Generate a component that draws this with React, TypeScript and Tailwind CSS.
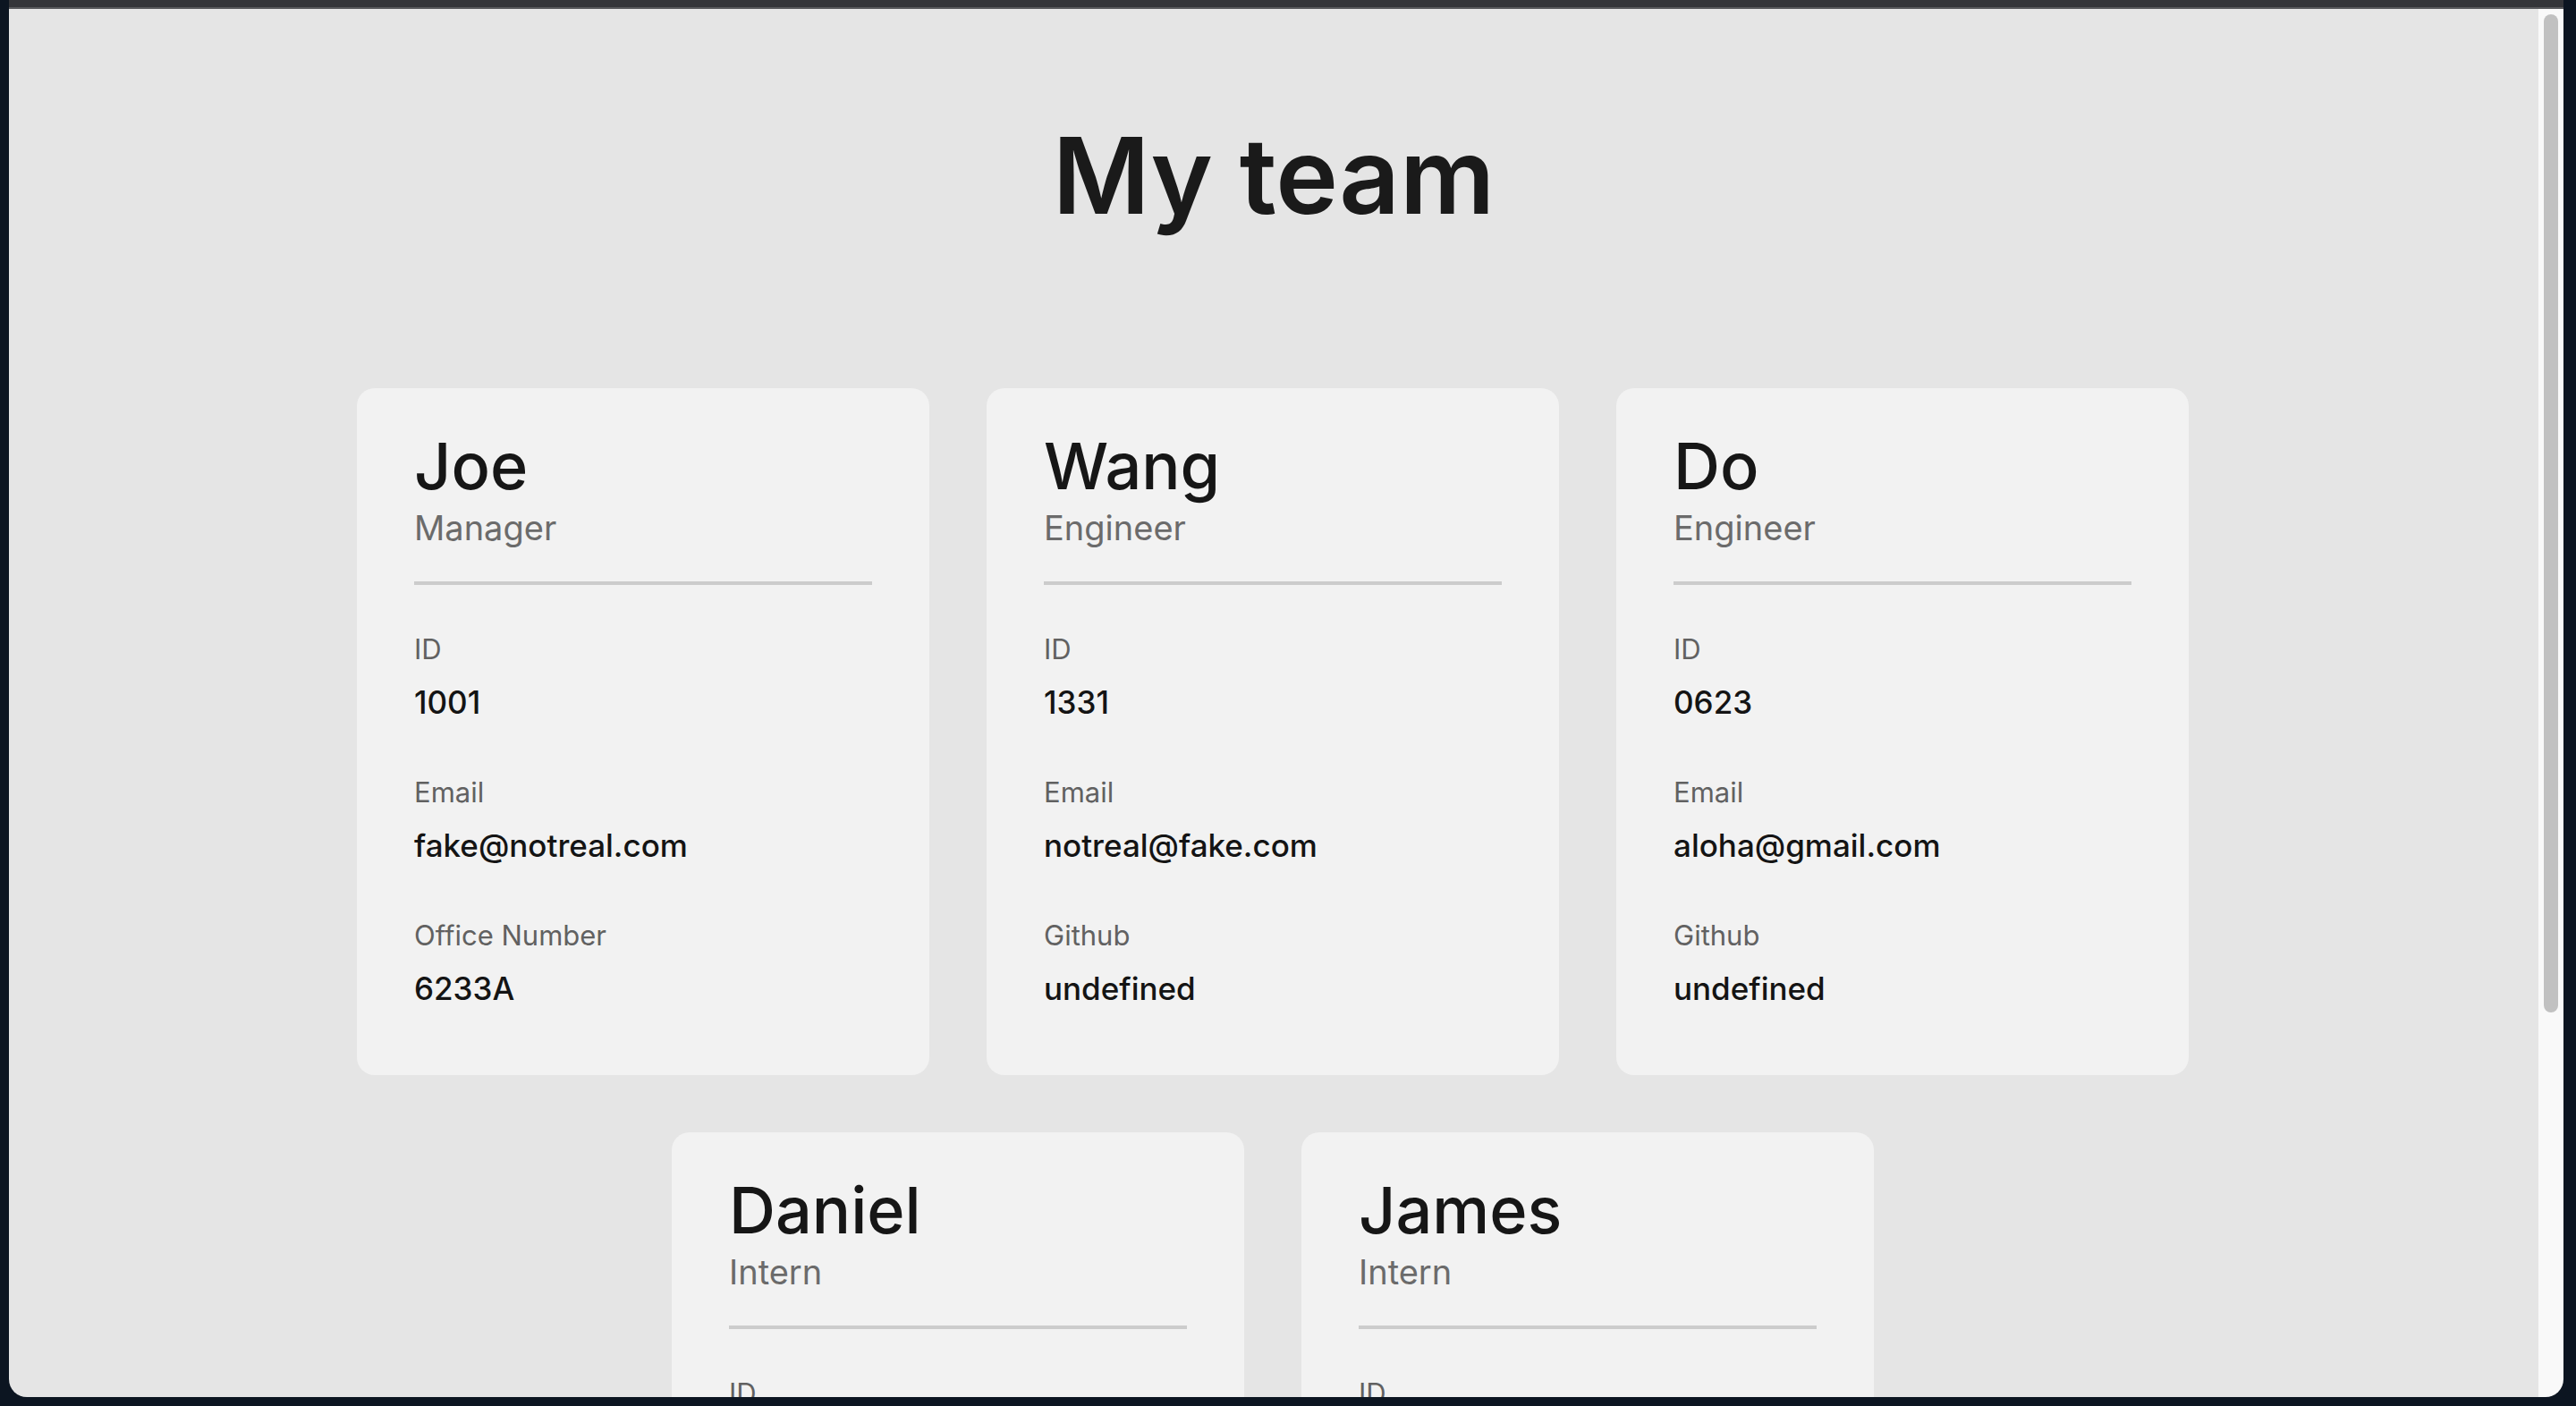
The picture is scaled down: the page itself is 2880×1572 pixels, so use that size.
const team = [
  { name: "Joe", role: "Manager", id: "1001", email: "fake@notreal.com", extraLabel: "Office Number", extra: "6233A" },
  { name: "Wang", role: "Engineer", id: "1331", email: "notreal@fake.com", extraLabel: "Github", extra: "undefined" },
  { name: "Do", role: "Engineer", id: "0623", email: "aloha@gmail.com", extraLabel: "Github", extra: "undefined" },
  { name: "Daniel", role: "Intern", id: "2002", email: "daniel@school.edu", extraLabel: "School", extra: "undefined" },
  { name: "James", role: "Intern", id: "2003", email: "james@school.edu", extraLabel: "School", extra: "undefined" },
];

type Member = (typeof team)[number];

function Field({ label, value, first }: { label: string; value: string; first?: boolean }) {
  return (
    <div className={first ? "mt-[56px]" : "mt-[67px]"}>
      <p className="text-[31px] leading-none text-[#616161]">{label}</p>
      <p className="mt-[27px] text-[35px] leading-none font-medium text-[#141414]">{value}</p>
    </div>
  );
}

function Card({ m }: { m: Member }) {
  return (
    <div className="w-[640px] h-[768px] rounded-[20px] bg-[#f2f2f2] px-[64px] pt-[51px]">
      <h2 className="text-[72px] leading-none font-medium text-[#161616]">{m.name}</h2>
      <p className="mt-[14px] text-[38px] leading-none text-[#6b6b6b]">{m.role}</p>
      <div className="mt-[41px] h-[4px] bg-[#cccccc]" />
      <Field first label="ID" value={m.id} />
      <Field label="Email" value={m.email} />
      <Field label={m.extraLabel} value={m.extra} />
    </div>
  );
}

export default function App() {
  return (
    <div
      className="w-[2880px] h-[1572px] bg-[#0c1521] pl-[10px] pr-[14px] pb-[10px] flex flex-col overflow-hidden"
      style={{ fontFamily: "Inter, 'Noto Sans', sans-serif" }}
    >
      <div className="h-[8px] bg-[#343539]" />
      <div className="h-[2px] bg-[#58595c]" />
      <div className="flex-1 flex min-h-0 rounded-b-[20px] overflow-hidden">
        <main className="flex-1 bg-[#e5e5e5] overflow-hidden pt-[127px]">
          <h1 className="text-center text-[118px] leading-none font-semibold text-[#1a1a1a]">
            My team
          </h1>
          <div className="mt-[179px] ml-[389px] w-[2048px] flex flex-wrap justify-center gap-[64px]">
            {team.map((m) => (
              <Card key={m.name} m={m} />
            ))}
          </div>
        </main>
        <div className="w-[28px] bg-[#f9f9f9] pt-[6px] px-[6px]">
          <div className="h-[1116px] rounded-full bg-[#c1c1c1]" />
        </div>
      </div>
    </div>
  );
}
